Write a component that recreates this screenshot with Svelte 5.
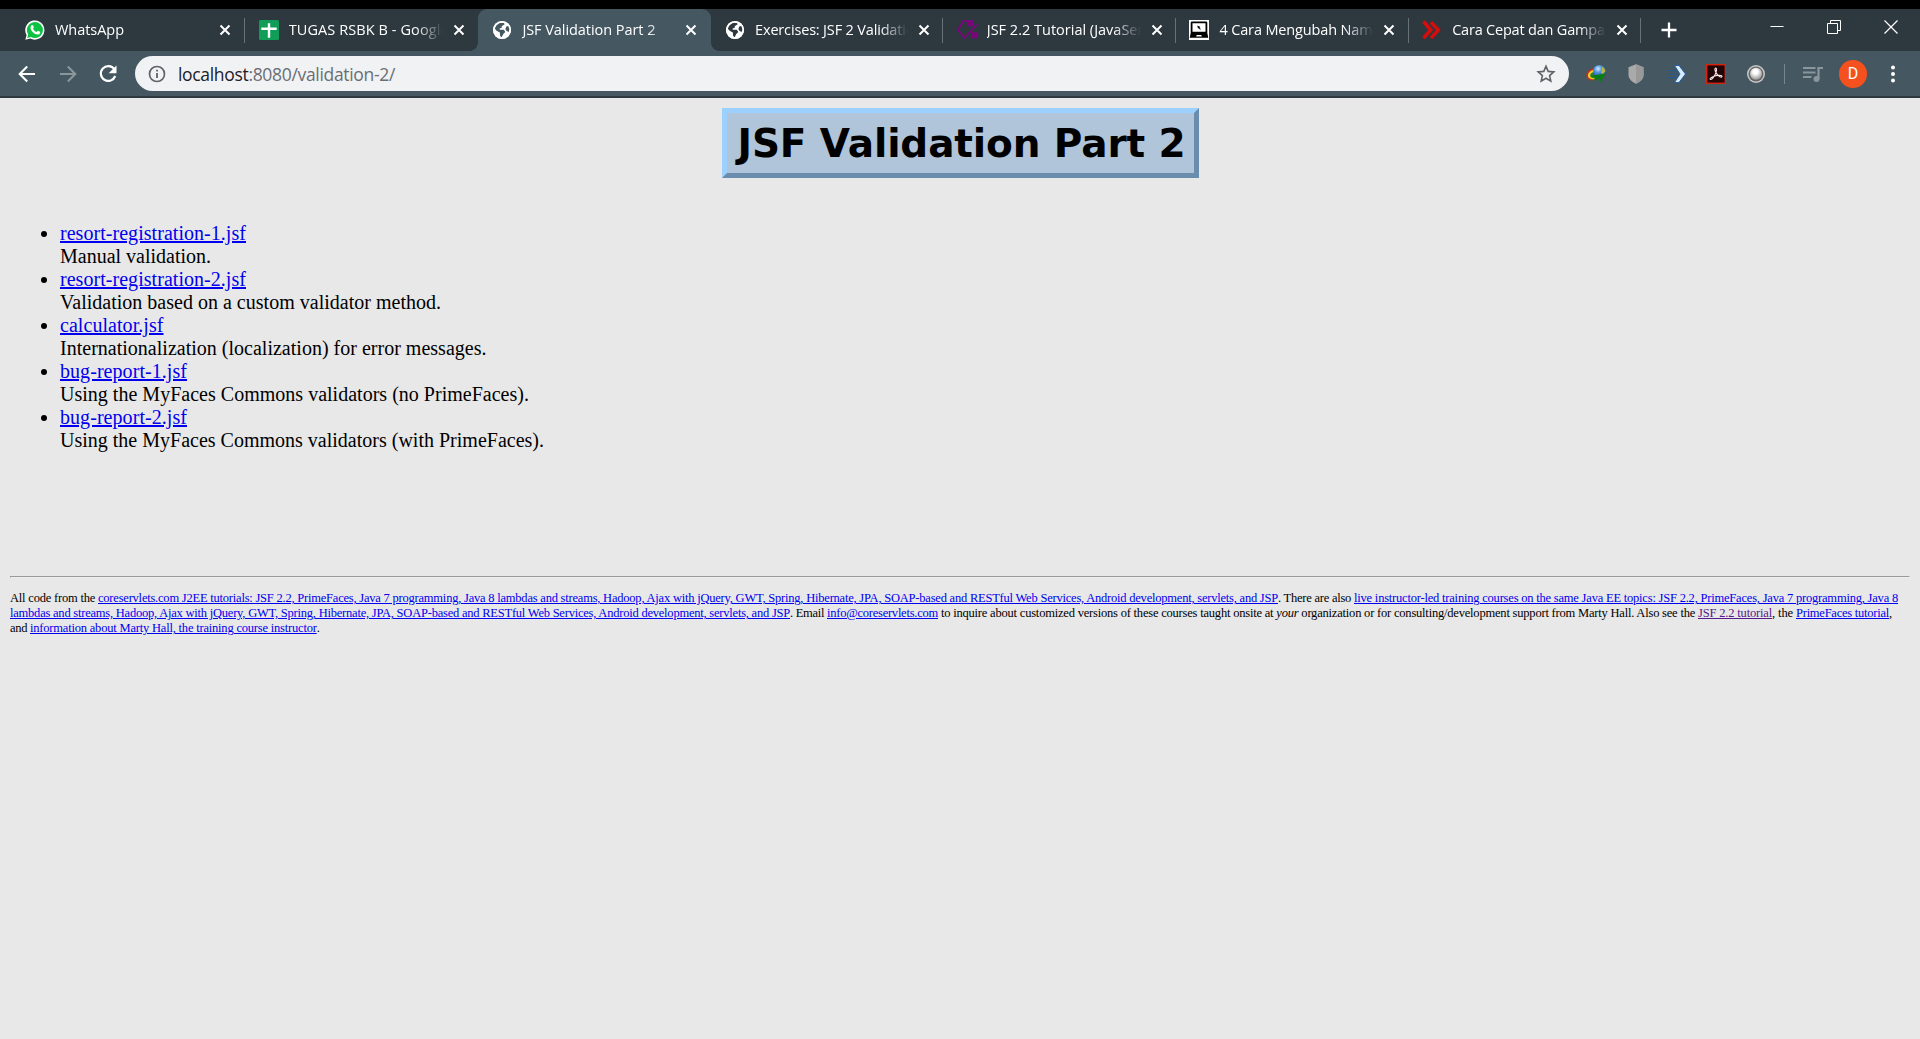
<script>
  import { onMount } from 'svelte';

  const tabs = [
    { title: 'WhatsApp', icon: 'whatsapp', width: 69 },
    { title: 'TUGAS RSBK B - Google', icon: 'sheets', width: 160 },
    { title: 'JSF Validation Part 2', icon: 'globe', width: 133, active: true },
    { title: 'Exercises: JSF 2 Validation', icon: 'globe', width: 168 },
    { title: 'JSF 2.2 Tutorial (JavaServer', icon: 'jsf', width: 178 },
    { title: '4 Cara Mengubah Nama', icon: 'laptop', width: 161 },
    { title: 'Cara Cepat dan Gampang', icon: 'chevrons', width: 169 }
  ];

  const pages = [
    { name: 'resort-registration-1.jsf', nameWidth: 186, text: 'Manual validation.', width: 151 },
    { name: 'resort-registration-2.jsf', nameWidth: 186, text: 'Validation based on a custom validator method.', width: 381 },
    { name: 'calculator.jsf', nameWidth: 103.5, text: 'Internationalization (localization) for error messages.', width: 426.5 },
    { name: 'bug-report-1.jsf', nameWidth: 127, text: 'Using the MyFaces Commons validators (no PrimeFaces).', width: 469 },
    { name: 'bug-report-2.jsf', nameWidth: 127, text: 'Using the MyFaces Commons validators (with PrimeFaces).', width: 484 }
  ];

  // Tracks the text of a node so that it spans the given width.
  function fit(node, width) {
    const apply = () => {
      node.style.letterSpacing = '0px';
      const natural = node.getBoundingClientRect().width;
      node.style.letterSpacing = (width - natural) / node.textContent.length + 'px';
    };
    apply();
    document.fonts?.ready.then(apply);
  }

  onMount(() => {
    document.title = 'JSF Validation Part 2';
  });
</script>

<div class="browser">
  <div class="strip">
    {#each tabs as tab}
      <div class="tab" class:active={tab.active} class:globe={tab.icon === 'globe'}>
        <svg class="favicon" viewBox="0 0 20 20">
          {#if tab.icon === 'whatsapp'}
            <path d="M0.3 19.8 1.6 15A9.6 9.6 0 1 1 5.3 18.5Z" fill="#fff" />
            <path d="M2.2 17.9 3.2 14.4A8 8 0 1 1 6 17Z" fill="#0dc143" />
            <path d="M6.5 5.2c.6-.5 1.300-.4 1.600.3l.7 1.600c.2.5-.7 1.300-.7 1.600.7 1.600 1.800 2.500 3.400 3.200.5 0 1-1.300 1.500-1.200l2 1c.6.3-.1 2.300-1.200 2.700-1.800.7-4.200-.5-5.900-2.100C6 10.400 4.600 7.500 6.500 5.200Z" fill="#fff" />
          {:else if tab.icon === 'sheets'}
            <rect width="20" height="20" rx="1.500" fill="#109d58" />
            <path d="M2.300 8.700H17.700M10 3.300V17.700" stroke="#fff" stroke-width="2.400" fill="none" />
          {:else if tab.icon === 'globe'}
            <circle cx="10" cy="10" r="9" fill="#fff" />
            <path d="M4.200 5.400 7.600 2.800 12 3 12.700 4.300 9.700 6.200 9.800 7.800 7.600 8.600 7.800 9.700 11.800 9.800 13.300 12 11.300 14 9.500 17.400 8 15.600 7.900 12.500 4.600 10.800 2.700 8.400Z" fill={tab.active ? '#455760' : '#2d383f'} />
            <path d="M14.300 6.500 17 5.800 18 9.200 16.500 12 14.500 10.800 13.400 9Z" fill={tab.active ? '#455760' : '#2d383f'} />
            <circle cx="10" cy="10" r="8.200" fill="none" stroke="#fff" stroke-width="1.700" />
          {:else if tab.icon === 'jsf'}
            <path d="M10.500 1.200H6.500L.8 10 7.500 18 19.800 4.500" fill="none" stroke="#820082" stroke-width="1.700" />
            <path d="M10.500.3h6v6h-6ZM14 12.300h6v6h-6Z" fill="#820082" />
            <path d="M12 2.200h3M12 4.200h3M15.500 14.200h3M15.500 16.200h3" stroke="#50204f" stroke-width=".7" />
          {:else if tab.icon === 'laptop'}
            <rect width="20" height="20" fill="#fff" />
            <path d="M3 1.500h14q1.300 0 1.300 1.300V13l1 4.800H.7L1.700 13V2.800Q1.700 1.500 3 1.500Z" fill="#000" />
            <path d="M3.500 3.200h13v8.500h-13ZM7.700 15h4.600l.6 1.600H7.100Z" fill="#fff" />
            <path d="m8.300 5.600 3.200 1.500-1 .4 1.300 1.700-.8.6-1.200-1.800-.8.8Z" fill="#000" />
          {:else}
            <path d="m1.500 1.500 7.300 8.500-7.300 8M9 2.300l7.300 7.800L9 18" fill="none" stroke="#d50d0d" stroke-width="3.600" />
          {/if}
        </svg>
        <div class="title"><span use:fit={tab.width}>{tab.title}</span></div>
        <svg class="close" viewBox="0 0 12 12"><path d="m1.500 1.500 9 9M10.500 1.500l-9 9" stroke="#fff" stroke-width="2" /></svg>
      </div>
    {/each}
    <svg class="plus" viewBox="0 0 16 16"><path d="M8 .5v15M.5 8h15" stroke="#fff" stroke-width="2.300" /></svg>
    <div class="window">
      <svg viewBox="0 0 14 14"><path d="M.5 6.500h13" stroke="#fff" /></svg>
      <svg viewBox="0 0 14 14"><path d="M.5 3.500h10v10H.5ZM3.500 3.500v-3h10v10h-3" fill="none" stroke="#fff" /></svg>
      <svg viewBox="0 0 14 14"><path d="m.5.5 13 13M13.500.5l-13 13" stroke="#fff" stroke-width="1.200" /></svg>
    </div>
  </div>

  <div class="toolbar">
    <div class="nav">
      <svg viewBox="0 0 20 20"><path d="M18 10H3M10.200 2.500 2.700 10l7.500 7.500" fill="none" stroke="#fff" stroke-width="2.100" /></svg>
      <svg viewBox="0 0 20 20"><path d="M2 10h15M9.800 2.500l7.500 7.500-7.500 7.500" fill="none" stroke="#8a969b" stroke-width="2.100" /></svg>
      <svg viewBox="0 0 20 20"><path d="M16.300 5.200A7.400 7.400 0 1 0 17.200 12" fill="none" stroke="#fff" stroke-width="2.200" /><path d="M18.500 1.500v7.800h-7.800Z" fill="#fff" /></svg>
    </div>
    <div class="omnibox">
      <svg class="info" viewBox="0 0 18 18"><circle cx="9" cy="9" r="7.500" fill="none" stroke="#5f6368" stroke-width="1.700" /><path d="M9 8v5M9 4.700v1.900" stroke="#5f6368" stroke-width="1.800" /></svg>
      <div class="url"><span use:fit={217}><b>localhost</b>:8080/validation-2/</span></div>
      <svg class="star" viewBox="0 0 20 20"><path d="m10 2.200 2.200 5.200 5.600.5-4.200 3.700 1.200 5.500-4.800-2.900-4.800 2.900 1.200-5.500L2.200 7.900l5.600-.5Z" fill="none" stroke="#5f6368" stroke-width="1.600" /></svg>
    </div>
    <div class="tools">
      <svg viewBox="0 0 20 20">
        <defs>
          <radialGradient id="earth" cx=".4" cy=".3" r=".7"><stop offset="0" stop-color="#d8ecff" /><stop offset=".4" stop-color="#5698e0" /><stop offset="1" stop-color="#174a9c" /></radialGradient>
        </defs>
        <path d="M9 4C2 5 0 9 .4 12c.5 4 4.600 5.300 8.600 4L7.500 12Z" fill="#c32f22" />
        <path d="M9 5.500C4 6.500 1.700 9 2 12c.3 2.400 3.500 4 7 3Z" fill="#f2cf25" />
        <path d="M9 7.500C5.500 8.300 4 10 4.200 12c.4 2 3.300 2.600 5.800 2Z" fill="#287c35" />
        <circle cx="13.300" cy="7.300" r="6.300" fill="url(#earth)" />
        <path d="M16 2.500c2 1 3.500 3 3.400 5L17 10l-2-1 .8-3Z" fill="#b5b742" />
        <path d="m5.500 11.700 14.300-2.200L14.500 18l-2-3.500-5 3 1.500-4.300Z" fill="#087d12" />
      </svg>
      <svg viewBox="0 0 20 20"><path d="m10 .3 7.500 3V11c0 4-3.500 7-7.500 8.800C6 18 2.500 15 2.500 11V3.300Z" fill="#aaa" /><path d="m10 .3 7.500 3V11c0 4-3.500 7-7.500 8.800Z" fill="#999" /></svg>
      <svg viewBox="0 0 20 20"><path d="M2 6.500h8M4 10h8M2 13.500h8" stroke="#205a96" stroke-width="1.200" /><path d="M8.500 1.500h4.500l6.500 8.500-6.500 8.500H8.500L14 10Z" fill="#d5edff" stroke="#1f599e" stroke-width=".9" /></svg>
      <svg viewBox="0 0 20 20"><rect x=".7" y=".7" width="18.600" height="18.600" fill="#240507" stroke="#d9230f" stroke-width="1.400" /><path d="M9.300 4.200c1.800-.6 1.400 3-.2 6.400-1.500 3-3.700 5.400-4.700 4.800-1.300-1 3-3.500 7-4 3-.4 5 .3 4.500 1.300-.7 1.100-3.700-.7-5.300-3-1.400-2-2.300-5-1.300-5.500Z" fill="none" stroke="#eee3e3" stroke-width="1.200" /></svg>
      <svg viewBox="0 0 20 20">
        <defs><radialGradient id="orb" cx=".45" cy=".35" r=".6"><stop offset=".3" stop-color="#fff" /><stop offset="1" stop-color="#a2a2a2" /></radialGradient></defs>
        <circle cx="10" cy="10" r="9" fill="#c7c7c7" /><circle cx="10" cy="10" r="7.500" fill="#666" /><circle cx="10" cy="9.700" r="6" fill="url(#orb)" />
      </svg>
      <i class="divider"></i>
      <svg viewBox="0 0 20 20"><path d="M0 4h12.500M0 8.500h12.500M0 13h8.500" stroke="#8a969b" stroke-width="1.800" /><path d="M15.500 15V4H20" fill="none" stroke="#8a969b" stroke-width="2.200" /><circle cx="13.500" cy="15" r="3" fill="#8a969b" /></svg>
      <span class="avatar">D</span>
      <svg class="menu" viewBox="0 0 20 20" fill="#fff"><circle cx="10" cy="3.500" r="2" /><circle cx="10" cy="10" r="2" /><circle cx="10" cy="16.500" r="2" /></svg>
    </div>
  </div>

  <main>
    <h1><span use:fit={448}>JSF Validation Part 2</span></h1>
    <ul>
      {#each pages as page}
        <li>
          <div><a href="#top" use:fit={page.nameWidth}>{page.name}</a></div>
          <div><span use:fit={page.width}>{page.text}</span></div>
        </li>
      {/each}
    </ul>
    <hr />
    <footer>
      <div><span use:fit={88}>All code from the&nbsp;</span><a href="#top" use:fit={1180}>coreservlets.com J2EE tutorials: JSF 2.2, PrimeFaces, Java 7 programming, Java 8 lambdas and streams, Hadoop, Ajax with jQuery, GWT, Spring, Hibernate, JPA, SOAP-based and RESTful Web Services, Android development, servlets, and JSP</a><span use:fit={76}>. There are also&nbsp;</span><a href="#top" use:fit={544}>live instructor-led training courses on the same Java EE topics: JSF 2.2, PrimeFaces, Java 7 programming, Java 8</a></div>
      <div><a href="#top" use:fit={780}>lambdas and streams, Hadoop, Ajax with jQuery, GWT, Spring, Hibernate, JPA, SOAP-based and RESTful Web Services, Android development, servlets, and JSP</a><span use:fit={37}>. Email&nbsp;</span><a href="#top" use:fit={111}>info@coreservlets.com</a><span use:fit={760}>&nbsp;to inquire about customized versions of these courses taught onsite at <em>your</em> organization or for consulting/development support from Marty Hall. Also see the&nbsp;</span><a class="visited" href="#top" use:fit={74}>JSF 2.2 tutorial</a><span use:fit={24}>, the&nbsp;</span><a href="#top" use:fit={93}>PrimeFaces tutorial</a><span>,</span></div>
      <div><span use:fit={20}>and&nbsp;</span><a href="#top" use:fit={286}>information about Marty Hall, the training course instructor</a><span>.</span></div>
    </footer>
  </main>
</div>

<style>
  :global(body) { margin: 0; background: #e8e8e8; }
  .browser { min-height: 1039px; background: #e8e8e8; overflow: hidden; }
  svg { display: block; flex: none; }
  .strip {
    box-sizing: border-box; height: 51px; border-top: 9px solid #000; padding-left: 12.500px;
    display: flex; background: #2d383f; font-family: 'Open Sans', 'Noto Sans', sans-serif;
  }
  .tab {
    position: relative; flex: none; box-sizing: border-box; width: 232.700px; height: 42px;
    padding-left: 13.500px; display: flex; align-items: center; color: #fff; font-size: 14.500px;
  }
  .tab:first-child { padding-left: 12.500px; }
  .tab.globe { padding-left: 14.500px; }
  .tab::after { content: ''; position: absolute; right: 0; top: 9px; width: 1px; height: 25px; background: #677176; }
  .tab.active::after, .tab:has(+ .active)::after { display: none; }
  .tab.active { background: #455760; border-radius: 9px 9px 0 0; }
  .tab.active::before {
    content: ''; position: absolute; bottom: 0; left: -8px; right: -8px; height: 8px;
    background:
      radial-gradient(circle at 0 0, transparent 7.500px, #455760 8px) left / 8px 8px no-repeat,
      radial-gradient(circle at 100% 0, transparent 7.500px, #455760 8px) right / 8px 8px no-repeat;
  }
  .favicon { width: 20px; height: 20px; }
  .title {
    width: 154px; margin-left: 10px; overflow: hidden; white-space: nowrap; line-height: 24px;
    mask-image: linear-gradient(90deg, #000 82%, transparent 100%);
  }
  .globe .title { width: 153px; }
  .close { width: 12px; height: 12px; margin-left: 10px; }
  .plus { width: 16px; height: 16px; margin: 13px 0 0 19.500px; }
  .window { display: flex; gap: 43px; margin: 11px 0 0 93.500px; }
  .window svg { width: 14px; height: 14px; }

  .toolbar {
    box-sizing: border-box; height: 47px; border-bottom: 2px solid #2d383f; background: #455760;
    display: flex; align-items: center; padding-left: 17px;
  }
  .nav { display: flex; gap: 20.500px; width: 118px; flex: none; }
  .nav svg { width: 20px; height: 20px; }
  .omnibox {
    flex: none; box-sizing: border-box; width: 1434px; height: 35px; border-radius: 18px; background: #f1f2f4;
    display: flex; align-items: center; padding: 0 13px 0 13px;
  }
  .info { width: 18px; height: 18px; }
  .url { flex: 1; margin-left: 12px; color: #6a6e73; font: 17.500px/30px 'Open Sans', 'Noto Sans', sans-serif; white-space: nowrap; }
  .url b { font-weight: 400; color: #202124; }
  .star { width: 20px; height: 20px; }
  .tools { display: flex; align-items: center; gap: 20px; margin-left: 17px; }
  .tools svg { width: 20px; height: 20px; }
  .divider { width: 1px; height: 20px; margin: 0 -2px; background: #78868c; }
  .avatar {
    width: 28px; height: 28px; margin: 0 -4px; border-radius: 50%; background: #f4511e; color: #fff;
    font: 16px/28px Roboto, sans-serif; text-align: center;
  }

  main { padding: 10px 10px 0; font-family: 'Liberation Serif', serif; color: #000; }
  h1 {
    box-sizing: border-box; width: 477px; height: 70px; margin: 0 auto; padding-left: 11px;
    border: 5px solid; border-color: #9cd0ff #6a8dad #6a8dad #9cd0ff; background: #b0c4da;
    font: bold 39px/62px 'DejaVu Sans', sans-serif; white-space: nowrap;
  }
  ul { margin: 44px 0 0; padding: 0 0 0 50px; font-size: 20px; line-height: 23px; white-space: nowrap; }
  a { color: #0000ee; text-decoration: underline; }
  a.visited { color: #551a8b; }
  hr { margin: 124px 0 0; border: 1px solid; border-color: #9a9a9a #eee #eee #9a9a9a; }
  footer { margin-top: 13px; font-size: 12.500px; line-height: 15px; white-space: nowrap; }
</style>
